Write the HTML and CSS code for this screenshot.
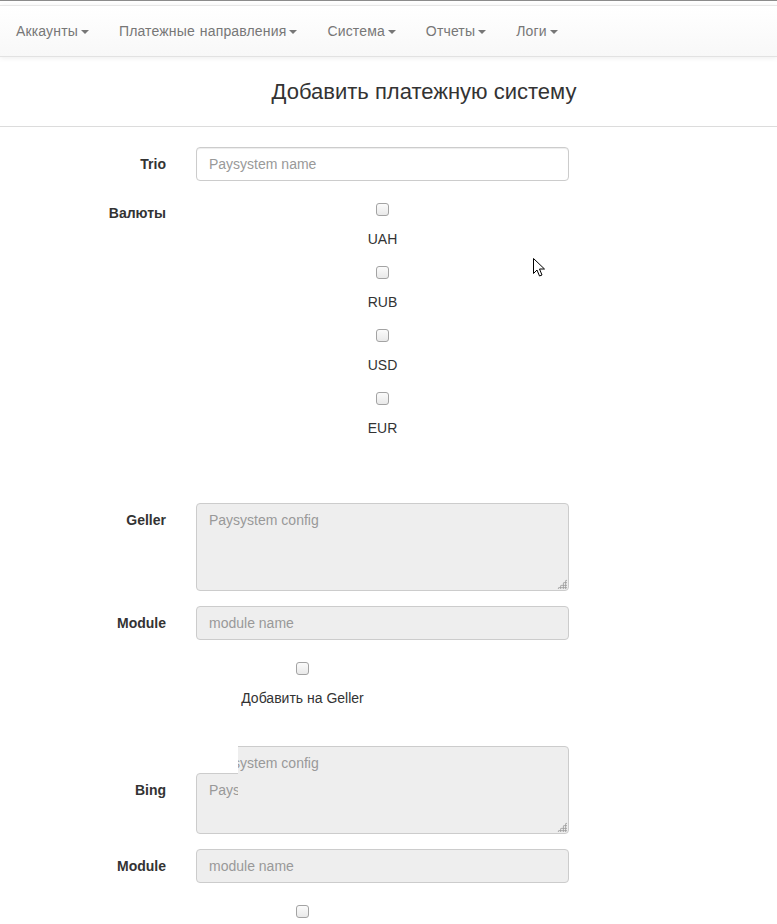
FILE: index.html
```html
<!DOCTYPE html>
<html lang="ru">
<head>
    <meta charset="UTF-8">
    <meta name="viewport" content="width=device-width, initial-scale=1.0">
    <title>Добавить платежную систему</title>
    <link rel="stylesheet" href="styles.css">
</head>
<body>
    <div class="topline"></div>

    <nav class="navbar">
        <ul class="nav">
            <li><a href="#accounts">Аккаунты<span class="caret"></span></a></li>
            <li><a href="#directions">Платежные направления<span class="caret"></span></a></li>
            <li><a href="#system">Система<span class="caret"></span></a></li>
            <li><a href="#reports">Отчеты<span class="caret"></span></a></li>
            <li><a href="#logs">Логи<span class="caret"></span></a></li>
        </ul>
    </nav>

    <h3 class="page-title">Добавить платежную систему</h3>

    <form class="form">
        <div class="row">
            <label class="row-label" for="psName">Trio</label>
            <div class="field">
                <input id="psName" class="input input-white" type="text" placeholder="Paysystem name">
            </div>
        </div>

        <div class="row">
            <span class="row-label">Валюты</span>
            <div class="field currencies">
                <div class="check"><input type="checkbox" id="curUAH"><label for="curUAH">UAH</label></div>
                <div class="check"><input type="checkbox" id="curRUB"><label for="curRUB">RUB</label></div>
                <div class="check"><input type="checkbox" id="curUSD"><label for="curUSD">USD</label></div>
                <div class="check"><input type="checkbox" id="curEUR"><label for="curEUR">EUR</label></div>
            </div>
        </div>

        <!-- Geller -->
        <div class="section section-geller">
            <div class="row">
                <label class="row-label">Geller</label>
                <div class="field">
                    <div class="textarea-wrap">
                        <textarea class="textarea" disabled placeholder="Paysystem config"></textarea>
                    </div>
                </div>
            </div>
            <div class="row">
                <label class="row-label">Module</label>
                <div class="field">
                    <input class="input" type="text" disabled placeholder="module name">
                </div>
            </div>
            <div class="check check-wide"><input type="checkbox" id="addGeller"><label for="addGeller">Добавить на Geller</label></div>
        </div>

        <!-- Bing -->
        <div class="section section-bing">
            <div class="row">
                <label class="row-label label-bing">Bing</label>
                <div class="field">
                    <div class="textarea-wrap">
                        <textarea class="textarea" disabled placeholder="Paysystem config"></textarea>
                        <div class="ghost"><div class="ghost-box">Paysystem config</div></div>
                    </div>
                </div>
            </div>
            <div class="row">
                <label class="row-label">Module</label>
                <div class="field">
                    <input class="input" type="text" disabled placeholder="module name">
                </div>
            </div>
            <div class="check check-wide"><input type="checkbox" id="addBing"><label for="addBing">Добавить на Bing</label></div>
        </div>
    </form>

    <svg class="cursor" width="13" height="20" viewBox="0 0 13 20">
        <path d="M0.5 0.5 L0.5 15.5 L4 12 L6.5 18 L9 17 L6.5 11 L11.5 11 Z" fill="#fff" stroke="#000" stroke-width="1"/>
    </svg>
</body>
</html>
```

FILE: styles.css
```css
body {
    font-family: "Liberation Sans", Arial, sans-serif;
    font-size: 14px;
    line-height: 20px;
    color: #333;
    margin: 0;
    padding: 0;
    background-color: #fff;
    position: relative;
}
.topline {
    height: 1px;
    background-color: #8c8c8c;
    margin-bottom: 4px;
}
.navbar {
    background-image: linear-gradient(to bottom, #fff 0, #f8f8f8 100%);
    border-top: 1px solid #e7e7e7;
    border-bottom: 1px solid #e2e2e2;
    box-shadow: 0 1px 5px rgba(0, 0, 0, 0.075);
}
.nav {
    list-style-type: none;
    margin: 0;
    padding: 0 0 0 1px;
    display: flex;
}
.nav li a {
    display: block;
    padding: 15px;
    line-height: 20px;
    color: #777;
    text-decoration: none;
    letter-spacing: 0.15px;
    word-spacing: 1px;
}
.caret {
    display: inline-block;
    width: 0;
    height: 0;
    margin-left: 3px;
    vertical-align: middle;
    border-top: 4px solid #777;
    border-right: 4px solid transparent;
    border-left: 4px solid transparent;
}
.page-title {
    margin: 0;
    height: 69px;
    display: flex;
    align-items: center;
    justify-content: center;
    padding-left: 71px;
    font-size: 22px;
    font-weight: normal;
    color: #333;
    border-bottom: 1px solid #dcdcdc;
}
.form {
    padding-top: 20px;
}
.row {
    display: flex;
    gap: 30px;
    margin-bottom: 15px;
}
.row-label {
    flex: none;
    width: 166px;
    text-align: right;
    font-weight: bold;
    padding-top: 7px;
}
.label-bing {
    padding-top: 34px;
}
.field {
    flex: none;
    width: 373px;
}
.input,
.textarea {
    display: block;
    width: 100%;
    box-sizing: border-box;
    padding: 6px 12px;
    font-family: inherit;
    font-size: 14px;
    line-height: 20px;
    color: #555;
    background-color: #eee;
    border: 1px solid #ccc;
    border-radius: 4px;
    margin: 0;
}
.input {
    height: 34px;
}
.input-white {
    background-color: #fff;
    box-shadow: inset 0 1px 1px rgba(0, 0, 0, 0.075);
}
.textarea {
    height: 88px;
    resize: none;
}
.input::placeholder,
.textarea::placeholder {
    color: #999;
    opacity: 1;
}
.textarea-wrap {
    position: relative;
}
.textarea-wrap::after {
    content: "";
    position: absolute;
    right: 2px;
    bottom: 2px;
    width: 10px;
    height: 10px;
    background-image: radial-gradient(circle, #9a9a9a 0.9px, transparent 1.1px);
    background-size: 2.5px 2.5px;
    clip-path: polygon(100% 0, 100% 100%, 0 100%);
}
/* kusok starogo risunka poverh textarea */
.ghost {
    position: absolute;
    left: 0;
    top: 0;
    width: 42px;
    height: 60px;
    overflow: hidden;
    background-color: #fff;
}
.ghost-box {
    margin-top: 27px;
    width: 200px;
    height: 88px;
    box-sizing: border-box;
    padding: 6px 12px;
    border: 1px solid #ccc;
    border-radius: 4px;
    background-color: #eee;
    color: #999;
    white-space: nowrap;
}
.currencies {
    padding-top: 7px;
}
.check {
    text-align: center;
    padding-bottom: 17px;
}
.check input {
    appearance: none;
    -webkit-appearance: none;
    display: block;
    width: 13px;
    height: 13px;
    margin: 0 auto;
    box-sizing: border-box;
    border: 1px solid #a3a3a3;
    border-radius: 3px;
    background-image: linear-gradient(to bottom, #fbfbfb, #e9e9e9);
}
.check label {
    display: block;
    margin-top: 13px;
    line-height: 20px;
}
.check-wide {
    width: 243px;
    margin-left: 181px;
    padding-top: 7px;
}
.section-geller {
    margin-top: 48px;
}
.section-bing {
    margin-top: 21px;
}
.cursor {
    position: absolute;
    left: 533px;
    top: 258px;
}
```
